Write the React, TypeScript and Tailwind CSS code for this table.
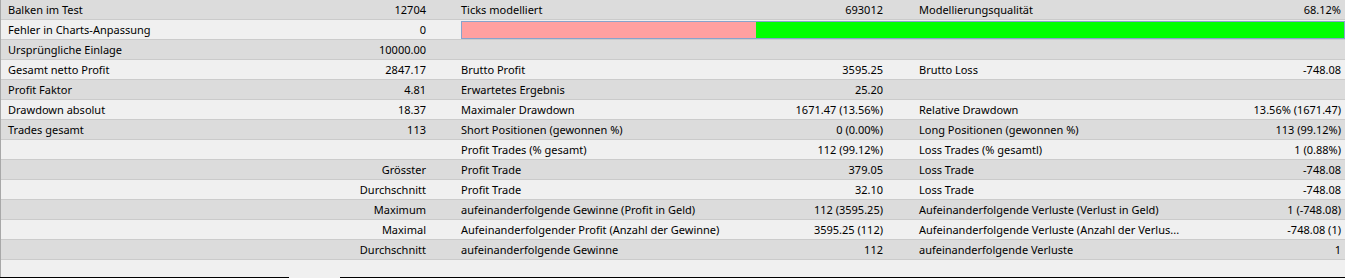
import React from 'react'

type Row = {
  label1?: string
  value1?: string
  label2?: string
  value2?: string
  label3?: string
  value3?: string
  bar?: boolean
}

const rows: Row[] = [
  { label1: 'Balken im Test', value1: '12704', label2: 'Ticks modelliert', value2: '693012', label3: 'Modellierungsqualität', value3: '68.12%' },
  { label1: 'Fehler in Charts-Anpassung', value1: '0', bar: true },
  { label1: 'Ursprüngliche Einlage', value1: '10000.00' },
  { label1: 'Gesamt netto Profit', value1: '2847.17', label2: 'Brutto Profit', value2: '3595.25', label3: 'Brutto Loss', value3: '-748.08' },
  { label1: 'Profit Faktor', value1: '4.81', label2: 'Erwartetes Ergebnis', value2: '25.20' },
  { label1: 'Drawdown absolut', value1: '18.37', label2: 'Maximaler Drawdown', value2: '1671.47 (13.56%)', label3: 'Relative Drawdown', value3: '13.56% (1671.47)' },
  { label1: 'Trades gesamt', value1: '113', label2: 'Short Positionen (gewonnen %)', value2: '0 (0.00%)', label3: 'Long Positionen (gewonnen %)', value3: '113 (99.12%)' },
  { label2: 'Profit Trades (% gesamt)', value2: '112 (99.12%)', label3: 'Loss Trades (% gesamtl)', value3: '1 (0.88%)' },
  { value1: 'Grösster', label2: 'Profit Trade', value2: '379.05', label3: 'Loss Trade', value3: '-748.08' },
  { value1: 'Durchschnitt', label2: 'Profit Trade', value2: '32.10', label3: 'Loss Trade', value3: '-748.08' },
  { value1: 'Maximum', label2: 'aufeinanderfolgende Gewinne (Profit in Geld)', value2: '112 (3595.25)', label3: 'Aufeinanderfolgende Verluste (Verlust in Geld)', value3: '1 (-748.08)' },
  { value1: 'Maximal', label2: 'Aufeinanderfolgender Profit (Anzahl der Gewinne)', value2: '3595.25 (112)', label3: 'Aufeinanderfolgende Verluste (Anzahl der Verlus...', value3: '-748.08 (1)' },
  { value1: 'Durchschnitt', label2: 'aufeinanderfolgende Gewinne', value2: '112', label3: 'aufeinanderfolgende Verluste', value3: '1' },
]

const ReportRow = ({ row, index }: { row: Row; index: number }) => {
  const dark = index % 2 === 0

  return (
    <div
      className={`flex h-[20px] items-center border-b border-[#cbcbcb] ${dark ? 'bg-[#dcdcdc]' : 'bg-[#f0f0f0]'}`}
    >
      <div className="flex w-[452px] shrink-0 items-center justify-between pl-[7px] pr-[27px]">
        <span>{row.label1}</span>
        <span>{row.value1}</span>
      </div>
      {row.bar ? (
        <div className="ml-[8px] flex h-[18px] flex-1 border border-[#86a3cc]">
          <div className="h-full w-[294px] bg-[#ffa0a0]" />
          <div className="h-full flex-1 bg-[#00ff00]" />
        </div>
      ) : (
        <>
          <div className="flex w-[458px] shrink-0 items-center justify-between pl-[8px] pr-[28px]">
            <span>{row.label2}</span>
            <span>{row.value2}</span>
          </div>
          <div className="flex flex-1 items-center justify-between pl-[8px] pr-[4px]">
            <span>{row.label3}</span>
            <span>{row.value3}</span>
          </div>
        </>
      )}
    </div>
  )
}

const App = () => {
  return (
    <div
      className="h-[278px] w-[1345px] overflow-hidden bg-[#f0f0f0] text-[11px] leading-none text-black"
      style={{ fontFamily: '"Noto Sans", "Open Sans", sans-serif' }}
    >
      <div className="flex h-[277px] flex-col border-l border-[#a8a8a8]">
        {rows.map((row, i) => (
          <ReportRow key={i} row={row} index={i} />
        ))}
        <div className="flex-1 bg-[#f0f0f0]" />
      </div>
      <div className="flex h-[1px]">
        <div className="w-[289px] bg-black" />
        <div className="w-[51px] bg-[#f0f0f0]" />
        <div className="flex-1 bg-black" />
      </div>
    </div>
  )
}

export default App
